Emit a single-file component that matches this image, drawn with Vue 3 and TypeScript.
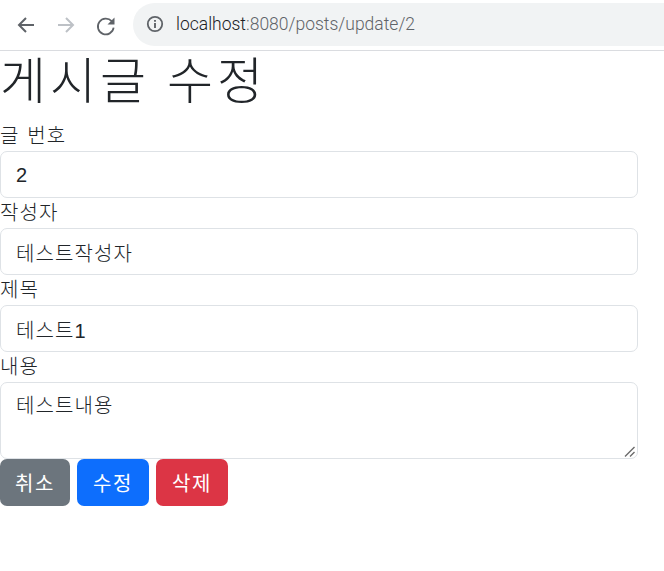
<script setup lang="ts">
const fields = [
  { label: '글 번호', value: '2' },
  { label: '작성자', value: '테스트작성자' },
  { label: '제목', value: '테스트1' },
]
</script>

<template>
  <div class="page">
    <header class="toolbar">
      <svg class="nav" viewBox="0 0 24 24" width="24" height="24" fill="none" stroke="#5f6368" stroke-width="2"><path d="M20 12H5M12 5l-7 7 7 7" /></svg>
      <svg class="nav" viewBox="0 0 24 24" width="24" height="24" fill="none" stroke="#bdc1c6" stroke-width="2"><path d="M4 12h15M12 5l7 7-7 7" /></svg>
      <svg class="nav" viewBox="0 0 24 24" width="24" height="24" fill="none"><path d="M18.4 7.6A9 9 0 1 0 20.6 15" stroke="#5f6368" stroke-width="2" transform="translate(1.5 1.5) scale(.88)" /><path d="M20.5 4.5v7h-7z" fill="#5f6368" /></svg>
      <div class="omnibox">
        <svg class="info" viewBox="0 0 18 18" width="18" height="18" fill="none"><circle cx="9" cy="9" r="7.2" stroke="#5f6368" stroke-width="1.8" /><path d="M9 8v5M9 5v1.8" stroke="#5f6368" stroke-width="1.9" /></svg>
        <span class="url"><span class="host">localhost</span>:8080/posts/update/2</span>
      </div>
    </header>
    <main class="content">
      <h1 class="title">게시글 수정</h1>
      <form class="form" @submit.prevent>
        <div v-for="f in fields" :key="f.label" class="field">
          <label class="label">{{ f.label }}</label>
          <input class="control" type="text" :value="f.value" />
        </div>
        <div class="field">
          <label class="label">내용</label>
          <div class="area-wrap">
            <textarea class="control area">테스트내용</textarea>
            <svg class="grip" viewBox="0 0 12 12" width="12" height="12" fill="none" stroke="#6b6b6b" stroke-width="1.4"><path d="M1 10.5 10.5 1M6 10.5 10.5 6" /></svg>
          </div>
        </div>
      </form>
      <div class="actions">
        <button class="btn gray" type="button">취소</button>
        <button class="btn blue" type="button">수정</button>
        <button class="btn red" type="button">삭제</button>
      </div>
    </main>
  </div>
</template>

<style scoped>
.page {
  width: 664px;
  height: 571px;
  overflow: hidden;
  background: #fff;
  color: #212529;
  font-family: "Liberation Sans", "Noto Sans CJK KR", sans-serif;
}
.toolbar {
  height: 50px;
  border-bottom: 1px solid #dadce0;
  display: flex;
  align-items: center;
  padding-left: 14px;
  gap: 16px;
  box-sizing: content-box;
}
.nav { flex: none; margin-top: -1px; }
.omnibox {
  flex: none;
  width: 560px;
  height: 43px;
  margin-left: -1px;
  margin-top: -2px;
  border-radius: 22px;
  background: #f1f3f4;
  display: flex;
  align-items: center;
  padding-left: 13px;
  gap: 12px;
}
.url {
  font-family: "Roboto", "Liberation Sans", sans-serif;
  font-size: 17.5px;
  font-weight: 300;
  color: #5f6368;
}
.host { color: #202124; }
.title {
  margin: 0 0 10px;
  padding-top: 2px;
  font-size: 50px;
  line-height: 58px;
  font-weight: 300;
  letter-spacing: 4px;
  word-spacing: -1px;
}
.form { display: flex; flex-direction: column; }
.field { display: flex; flex-direction: column; }
.label {
  box-sizing: border-box;
  height: 30px;
  padding-top: 1px;
  font-size: 20px;
  line-height: 29px;
  font-weight: 300;
  letter-spacing: 1.1px;
  word-spacing: 1px;
}
.area-wrap { position: relative; height: 77px; }
.control {
  width: 638px;
  height: 47px;
  box-sizing: border-box;
  display: block;
  padding: 8px 15px 6px;
  border: 1px solid #dee2e6;
  border-radius: 7px;
  font: inherit;
  font-size: 20px;
  font-weight: 300;
  line-height: 30px;
  letter-spacing: 1.1px;
  color: #212529;
  background: #fff;
  outline: none;
}
.area { height: 77px; resize: none; }
.grip {
  position: absolute;
  left: 624px;
  top: 64px;
}
.actions { display: flex; gap: 7px; }
.btn {
  width: 72px;
  height: 47px;
  border: 0;
  border-radius: 7px;
  color: #fff;
  font: inherit;
  font-size: 20px;
  letter-spacing: 1.5px;
  padding: 0;
}
.gray { background: #6c757d; width: 70px; }
.blue { background: #0d6efd; }
.red { background: #dc3545; }
</style>
